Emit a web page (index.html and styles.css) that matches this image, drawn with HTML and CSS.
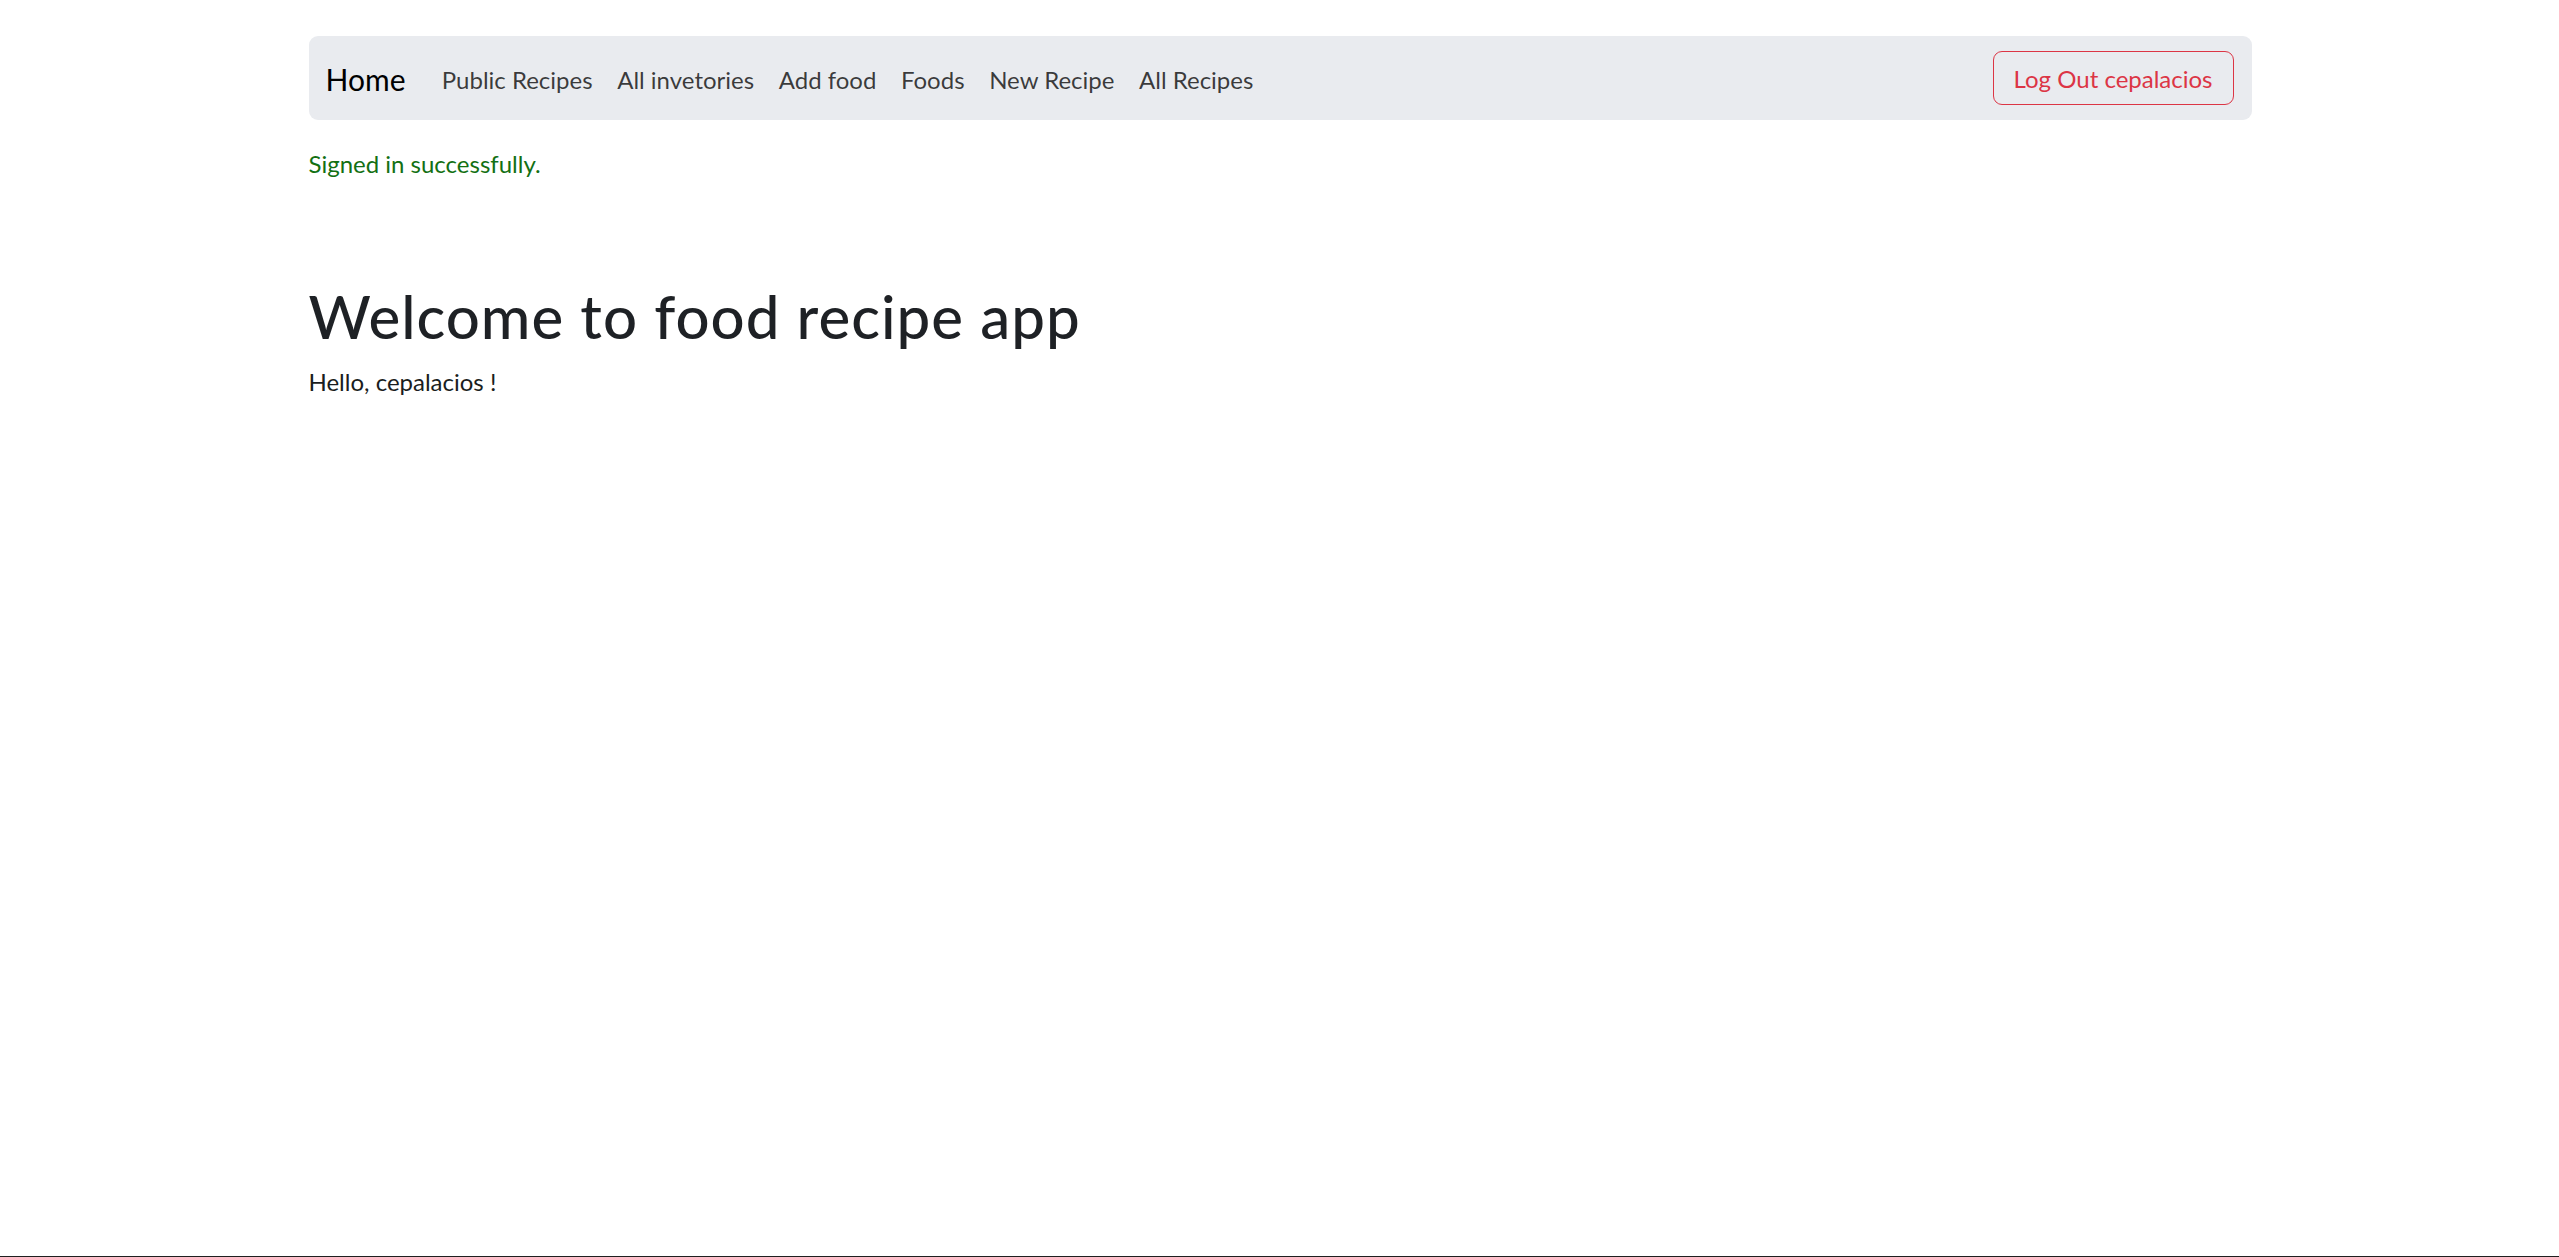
FILE: index.html
```html
<!DOCTYPE html>
<html lang="en">
<head>
  <meta charset="utf-8">
  <title>Food Recipe App</title>
  <link rel="stylesheet" href="styles.css">
</head>
<body>
  <div class="container">
    <nav class="navbar">
      <a class="brand" href="#">Home</a>
      <ul class="nav-links">
        <li><a href="#">Public Recipes</a></li>
        <li><a href="#">All invetories</a></li>
        <li><a href="#">Add food</a></li>
        <li><a href="#">Foods</a></li>
        <li><a href="#">New Recipe</a></li>
        <li><a href="#">All Recipes</a></li>
      </ul>
      <button class="btn-logout" type="button">Log Out cepalacios</button>
    </nav>
    <p class="notice">Signed in successfully.</p>
    <main class="welcome">
      <h1>Welcome to food recipe app</h1>
      <p>Hello, cepalacios !</p>
    </main>
  </div>
</body>
</html>
```
FILE: styles.css
```css
html {
  margin: 0;
}

body {
  margin: 0;
  min-height: 100vh;
  box-sizing: border-box;
  border-bottom: 1px solid #1f1f1f;
  font-family: Lato, "Open Sans", sans-serif;
  font-size: 24px;
  line-height: 1.5;
  color: #212529;
  background: #fff;
}

.container {
  box-sizing: border-box;
  max-width: 1980px;
  margin: 0 auto;
  padding: 36px 18px 0 19px;
}

.navbar {
  display: flex;
  align-items: center;
  background: #e9ebef;
  border-radius: 9px;
  padding: 12px 18px 12px 17px;
  margin-bottom: 25.5px;
}

.brand {
  font-size: 30px;
  line-height: 45px;
  padding: 9px 0 6px;
  margin-right: 24px;
  color: #000;
  text-decoration: none;
}

.nav-links {
  display: flex;
  list-style: none;
  margin: 0;
  padding: 0;
}

.nav-links a {
  display: block;
  padding: 13.5px 12.3px 10.5px;
  color: rgba(0, 0, 0, 0.76);
  text-decoration: none;
}

.btn-logout {
  margin-left: auto;
  font: inherit;
  line-height: 34px;
  padding: 10px 20px 8px;
  border: 1.5px solid #dc3545;
  border-radius: 9px;
  color: #dc3545;
  background: transparent;
}

.notice {
  color: #137013;
  margin: 0;
}

.welcome {
  margin-top: 98.5px;
}

.welcome h1 {
  font-size: 60px;
  line-height: 72px;
  font-weight: 500;
  letter-spacing: 1px;
  margin: 0 0 12px;
  color: #1e2125;
}

.welcome p {
  margin: 0;
  color: #1a1d20;
}
```
